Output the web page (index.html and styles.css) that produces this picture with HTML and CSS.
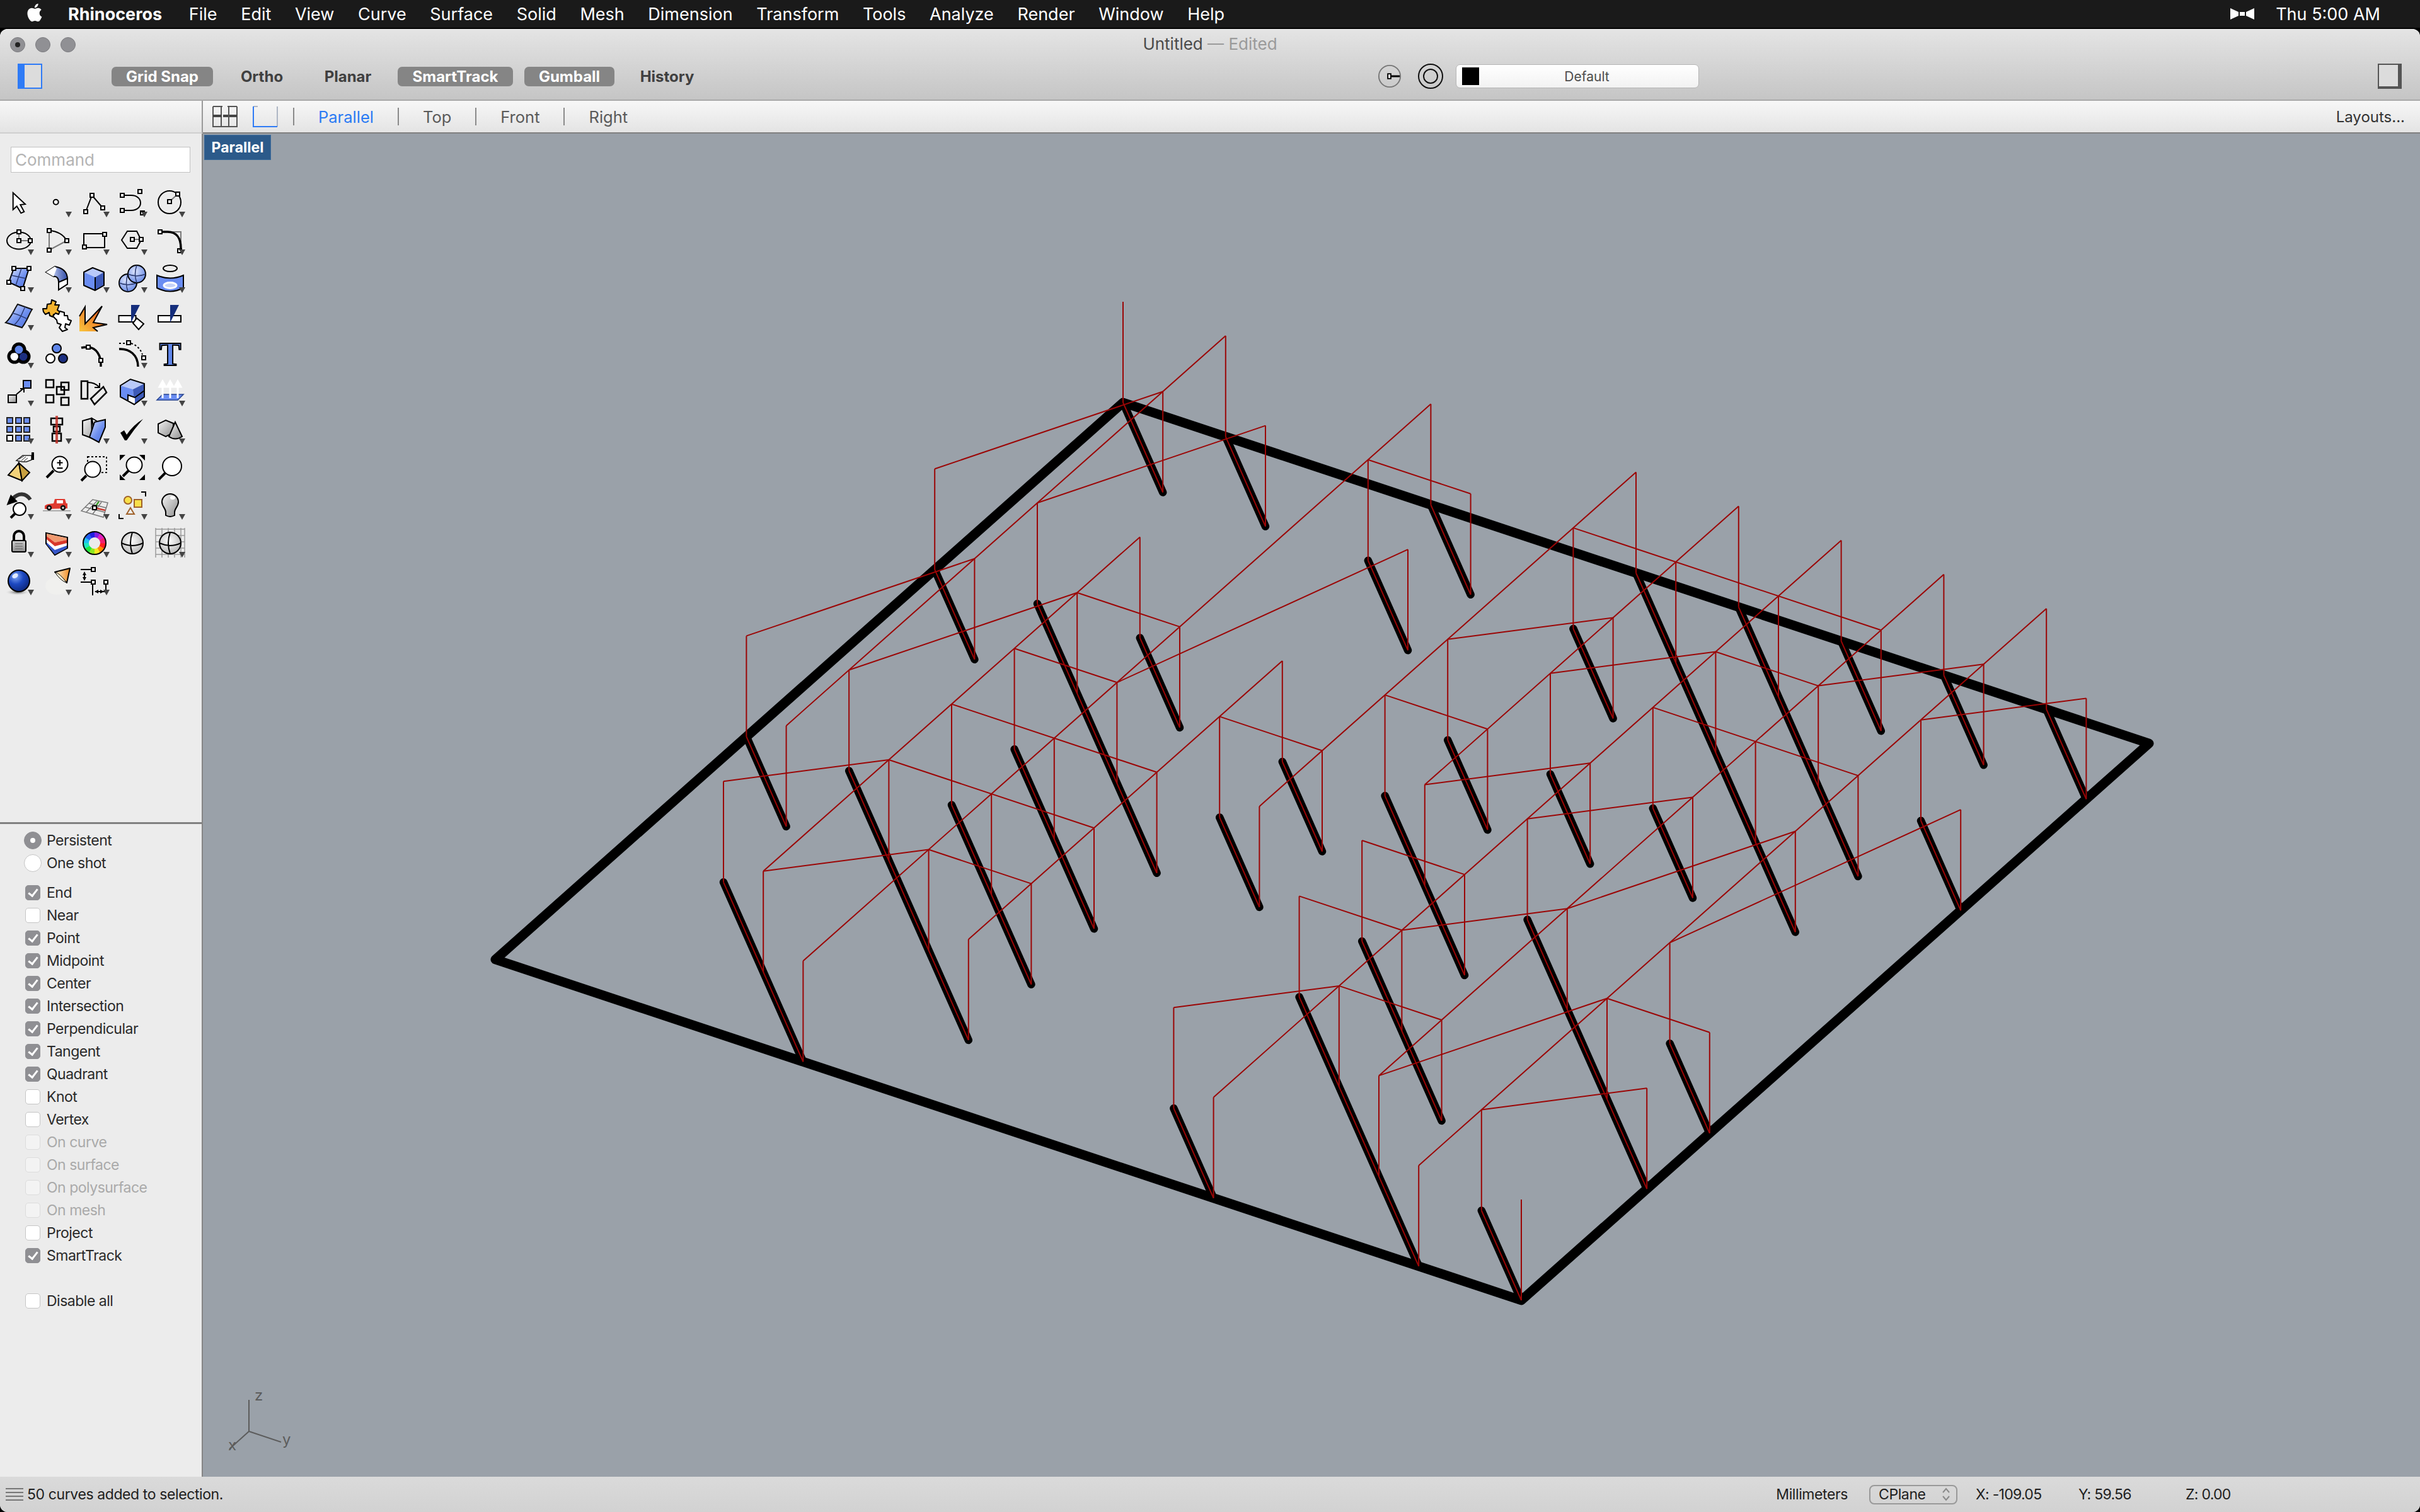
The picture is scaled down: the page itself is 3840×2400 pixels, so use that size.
FILE: index.html
```html
<!DOCTYPE html>
<html lang="en">
<head>
<meta charset="utf-8">
<title>Rhinoceros</title>
<link rel="stylesheet" href="styles.css">
</head>
<body>
<svg class="defs" width="0" height="0">
<defs>
<linearGradient id="b" x1="0" y1="0" x2="1" y2="1"><stop offset="0" stop-color="#dbe3fd"/><stop offset=".55" stop-color="#6f90ef"/><stop offset="1" stop-color="#4a6cd8"/></linearGradient>
<linearGradient id="sw" x1="0" y1="0" x2="1" y2="0"><stop offset="0" stop-color="#fff"/><stop offset=".2" stop-color="#cdd8f8"/><stop offset="1" stop-color="#2f4aa5"/></linearGradient>
<linearGradient id="o" x1="0" y1="1" x2="1" y2="0"><stop offset="0" stop-color="#f9c63e"/><stop offset=".6" stop-color="#ee7a28"/><stop offset="1" stop-color="#dd3a18"/></linearGradient>
<linearGradient id="g" x1="0" y1="0" x2="1" y2="1"><stop offset="0" stop-color="#f4f4f4"/><stop offset="1" stop-color="#8e8e8e"/></linearGradient>
<linearGradient id="lk" x1="0" y1="0" x2="0" y2="1"><stop offset="0" stop-color="#cfcfcf"/><stop offset="1" stop-color="#8b8b8b"/></linearGradient>
<linearGradient id="cone" x1="0" y1="0" x2="1" y2="0"><stop offset="0" stop-color="#fff3d6"/><stop offset="1" stop-color="#f08a20"/></linearGradient>
<radialGradient id="ball" cx=".35" cy=".3" r=".8"><stop offset="0" stop-color="#7fa6f5"/><stop offset=".45" stop-color="#1c48c0"/><stop offset="1" stop-color="#0a2270"/></radialGradient>
<radialGradient id="sph" cx=".4" cy=".35" r=".75"><stop offset="0" stop-color="#dfe6fd"/><stop offset="1" stop-color="#5a7fe2"/></radialGradient>
<radialGradient id="gs" cx=".45" cy=".4" r=".75"><stop offset="0" stop-color="#ffffff"/><stop offset="1" stop-color="#a9a9a9"/></radialGradient>
<radialGradient id="sh" cx=".5" cy=".5" r=".5"><stop offset="0" stop-color="#555"/><stop offset="1" stop-color="#ececec" stop-opacity="0"/></radialGradient>
<rect id="q" class="sq" x="-3" y="-3" width="6" height="6"/>
<polygon id="t" class="tri" points="44,46 54,46 49,55"/>
</defs>
</svg>

<header class="menubar">
  <svg class="apple" viewBox="0 0 24 24"><path d="M18.71 19.5c-.83 1.24-1.71 2.45-3.05 2.47-1.34.03-1.77-.79-3.29-.79-1.53 0-2 .77-3.27.82-1.31.05-2.3-1.32-3.14-2.53C4.25 17 2.94 12.45 4.7 9.39c.87-1.52 2.43-2.48 4.12-2.51 1.28-.02 2.5.87 3.29.87.78 0 2.26-1.07 3.81-.91.65.03 2.47.26 3.64 1.98-.09.06-2.17 1.28-2.15 3.81.03 3.02 2.65 4.03 2.68 4.04-.03.07-.42 1.44-1.38 2.83M13 3.5c.73-.83 1.94-1.46 2.94-1.5.13 1.17-.34 2.35-1.04 3.19-.69.85-1.83 1.51-2.95 1.42-.15-1.15.41-2.35 1.05-3.11z"/></svg>
  <nav class="menus">
    <span class="app">Rhinoceros</span><span>File</span><span>Edit</span><span>View</span><span>Curve</span><span>Surface</span><span>Solid</span><span>Mesh</span><span>Dimension</span><span>Transform</span><span>Tools</span><span>Analyze</span><span>Render</span><span>Window</span><span>Help</span>
  </nav>
  <div class="extras">
    <svg class="bowtie" viewBox="0 0 38 18"><path d="M0 0 13 6V12L0 18ZM38 0 25 6V12L38 18ZM15 6H23V12H15Z"/></svg>
    <span>Thu 5:00 AM</span>
  </div>
</header>

<div class="window">
  <div class="chrome">
    <div class="titlebar">
      <div class="lights"><i class="light active"></i><i class="light"></i><i class="light"></i></div>
      <div class="title">Untitled <span class="edited">— Edited</span></div>
      <div></div>
    </div>
    <div class="tools">
      <svg class="panel-l" viewBox="0 0 39 40"><rect x="1" y="1" width="37" height="38" fill="#dcdcdc" stroke="#2f7bf6" stroke-width="2"/><rect width="11" height="40" fill="#2f7bf6"/></svg>
      <div class="toggles">
        <span class="tg on t1">Grid Snap</span><span class="tg t2">Ortho</span><span class="tg t3">Planar</span><span class="tg on t4">SmartTrack</span><span class="tg on t5">Gumball</span><span class="tg t6">History</span>
      </div>
      <div class="center">
        <svg class="osnap" viewBox="0 0 40 40"><circle cx="20" cy="20" r="18" fill="none" stroke="#777" stroke-width="2"/><rect x="17" y="16" width="5" height="8" fill="#fff" stroke="#000" stroke-width="2"/><path d="M22 20H37" stroke="#000" stroke-width="3"/></svg>
        <svg class="osnap two" viewBox="0 0 42 42"><circle cx="21" cy="21" r="19" fill="none" stroke="#111" stroke-width="2"/><circle cx="21" cy="21" r="11" fill="none" stroke="#111" stroke-width="2"/></svg>
        <div class="layer"><i class="swatch"></i><span>Default</span></div>
      </div>
      <svg class="panel-r" viewBox="0 0 38 40"><rect x="1" y="1" width="34" height="36" fill="#dcdcdc" stroke="#555" stroke-width="2"/><rect x="32" y="0" width="6" height="40" fill="#555"/><rect y="36" width="38" height="4" fill="#555"/></svg>
    </div>
  </div>

  <div class="tabs">
    <div class="tabs-left"></div>
    <div class="tabs-right">
      <svg class="vp-ic" viewBox="0 0 40 34"><path d="M1 1V33H39V1M1 1H16M24 1H39M14 1V33M26 1V33" fill="none" stroke="#555" stroke-width="2"/><path d="M1 16H39" stroke="#444" stroke-width="4" stroke-dasharray="14 2 8 2 14"/></svg>
      <svg class="vp-ic" viewBox="0 0 40 34"><path d="M1 1H8M39 1V33M1 1V33" fill="none" stroke="#aeb6c4" stroke-width="2"/><path d="M1 1V33H39" fill="none" stroke="#2f7bf6" stroke-width="2"/></svg>
      <i class="sep"></i><span class="tab active">Parallel</span>
      <i class="sep"></i><span class="tab">Top</span>
      <i class="sep"></i><span class="tab">Front</span>
      <i class="sep"></i><span class="tab">Right</span>
      <span class="layouts">Layouts...</span>
    </div>
  </div>

  <div class="main">
    <aside class="side">
      <div class="command">Command</div>
      <div class="palette">
        <svg class="ic" viewBox="0 0 60 60"><polygon class="w" points="20.7,16 20.7,42.7 26.7,37.3 33.3,48.3 38.3,46 32.3,35 40,34"/></svg>
        <svg class="ic" viewBox="0 0 60 60"><circle class="w" cx="28.7" cy="30.7" r="4"/><use href="#t"/></svg>
        <svg class="ic" viewBox="0 0 60 60"><path class="k" d="M16 46 26 20 43 40"/><use href="#q" x="16" y="46"/><use href="#q" x="26" y="20"/><use href="#q" x="43" y="40"/><use href="#t"/></svg>
        <svg class="ic" viewBox="0 0 60 60"><path class="k" d="M14 20H28C48 20 48 44 28 44H14"/><use href="#q" x="14" y="20"/><use href="#q" x="42" y="14"/><use href="#q" x="14" y="44"/><use href="#q" x="46" y="48"/><use href="#t"/></svg>
        <svg class="ic" viewBox="0 0 60 60"><circle class="k" cx="29" cy="31" r="18"/><path class="gl" d="M29 30 42 18"/><use href="#q" x="29" y="30"/><use href="#q" x="42" y="18"/><use href="#t"/></svg>

        <svg class="ic" viewBox="0 0 60 60"><ellipse class="k" cx="30" cy="32" rx="19" ry="13.5"/><path class="gl" d="M30 18V32H48"/><use href="#q" x="30" y="18"/><use href="#q" x="30" y="32"/><use href="#q" x="48" y="32"/><use href="#t"/></svg>
        <svg class="ic" viewBox="0 0 60 60"><path class="gl" d="M18 16V47L46 32"/><path class="k" d="M18 16C31 17 41 23 46 32"/><use href="#q" x="18" y="16"/><use href="#q" x="46" y="32"/><use href="#q" x="18" y="47"/><use href="#t"/></svg>
        <svg class="ic" viewBox="0 0 60 60"><rect class="k" x="13" y="21" width="33" height="22"/><use href="#q" x="46" y="22"/><use href="#q" x="14" y="42"/><use href="#t"/></svg>
        <svg class="ic" viewBox="0 0 60 60"><polygon class="k" points="13,31 22,17 37,17 44,31 37,44 22,44"/><path class="gl" d="M30 30H44"/><use href="#q" x="30" y="30"/><use href="#q" x="44" y="30"/><use href="#t"/></svg>
        <svg class="ic" viewBox="0 0 60 60"><path class="gl" d="M23 18H47V40"/><path class="k th" d="M14 18H26C40 18 47 28 47 44"/><use href="#q" x="14" y="18"/><use href="#q" x="45" y="48"/><use href="#t"/></svg>

        <svg class="ic" viewBox="0 0 60 60"><path d="M22 16H46L36 48 14 38Z" fill="url(#b)" stroke="#000" stroke-width="2"/><path class="dk" d="M34 16 25 43M18 27 41 32"/><use href="#q" x="22" y="16"/><use href="#q" x="46" y="16"/><use href="#q" x="14" y="38"/><use href="#q" x="36" y="48"/><use href="#t"/></svg>
        <svg class="ic" viewBox="0 0 60 60"><path d="M13 22 27 13C38 15 47 21 47 33V41L33 50V37C33 30 28 28 25 29Z" fill="url(#sw)" stroke="#000" stroke-width="2"/><path d="M13 22 27 13 30 16 25 29Z" fill="#fff"/><path d="M33 50V38L47 32V41Z" fill="#fff" stroke="#000" stroke-width="2"/><use href="#t"/></svg>
        <svg class="ic" viewBox="0 0 60 60"><polygon points="13,22 27,15 45,22 31,30" fill="#b9c9f9"/><polygon points="13,22 31,30 31,51 13,43" fill="#6a8df2"/><polygon points="31,30 45,22 45,43 31,51" fill="#3d5ab8"/><path class="k" d="M13 22 27 15 45 22V43L31 51 13 43ZM31 30V51" stroke-linejoin="round"/><use href="#t"/></svg>
        <svg class="ic" viewBox="0 0 60 60"><circle cx="23" cy="39" r="14" fill="url(#sph)" stroke="#000" stroke-width="2"/><path class="dk" d="M9 39Q23 45 37 39M23 25Q18 39 23 53"/><circle cx="37" cy="25" r="14" fill="url(#sph)" stroke="#000" stroke-width="2"/><path class="dk" d="M23 25Q37 31 51 25M37 11Q32 25 37 39"/><use href="#t"/></svg>
        <svg class="ic" viewBox="0 0 60 60"><ellipse class="k" cx="30" cy="16" rx="11" ry="5"/><path d="M9 27Q30 36 51 27V47Q30 58 9 47Z" fill="#6a8df2" stroke="#000" stroke-width="2"/><ellipse cx="30" cy="43" rx="10" ry="4.5" fill="#c5d2f8" stroke="#fff" stroke-width="3"/><use href="#t"/></svg>

        <svg class="ic" viewBox="0 0 60 60"><path d="M28 13 51 21C46 28 44 38 35 50L9 42C17 36 22 22 28 13Z" fill="url(#b)" stroke="#111" stroke-width="2"/><path class="dk" d="M40 17C35 26 33 37 22 46M19 27C27 28 36 33 43 36" /><use href="#t"/></svg>
        <svg class="ic" viewBox="0 0 60 60"><path d="M8 20 14 20 15 13 21 12 22 6 29 9 27 14 34 14 31 22 36 26 29 31 25 29 24 33 19 31 18 26 12 29 9 25Z" fill="#f3b32f" stroke="#000" stroke-width="2" stroke-linejoin="round"/><path d="M24 32 28 27 33 29 35 24 42 26 42 31 47 31 48 37 53 39 50 46 44 44 43 50 47 53 39 56 34 50 37 45 31 43 30 38Z" fill="#fff" stroke="#000" stroke-width="2" stroke-linejoin="round"/></svg>
        <svg class="ic" viewBox="0 0 60 60"><polygon points="6,32 15,17 15,44 42,16 28,42 50,45 28,50 35,56 6,56" fill="url(#o)"/><path class="k" d="M6 32 15 17V44L42 16 28 42 50 45 28 50 35 56"/></svg>
        <svg class="ic" viewBox="0 0 60 60"><rect class="w" x="8.5" y="31" width="27" height="10"/><polygon points="28,14 42,14 28,42" fill="#152e7c"/><polygon class="w" points="37,35 48,44 40,53 31,43"/></svg>
        <svg class="ic" viewBox="0 0 60 60"><rect class="w" x="11" y="31" width="36" height="10"/><polygon points="30,14 44,14 30,42" fill="#152e7c"/></svg>

        <svg class="ic" viewBox="0 0 60 60"><circle cx="23" cy="36" r="9" fill="#fff" stroke="#000" stroke-width="5"/><circle cx="37" cy="36" r="9" fill="#1c2f80" stroke="#000" stroke-width="5"/><circle cx="30" cy="25" r="9" fill="#5f86ea" stroke="#000" stroke-width="5"/><circle cx="23" cy="36" r="6" fill="#fff"/><circle cx="37" cy="36" r="6" fill="#1c2f80"/><use href="#t"/></svg>
        <svg class="ic" viewBox="0 0 60 60"><circle cx="30" cy="23" r="7" fill="#5f86ea" stroke="#000" stroke-width="2"/><circle cx="20" cy="39" r="7" fill="#fff" stroke="#000" stroke-width="2"/><circle cx="40" cy="39" r="7" fill="#1c2f80" stroke="#000" stroke-width="2"/></svg>
        <svg class="ic" viewBox="0 0 60 60"><path class="k th" d="M9 22Q13 21 20 21C32 22 41 33 40 52"/><use href="#q" x="20" y="21"/><use href="#q" x="40" y="42"/></svg>
        <svg class="ic" viewBox="0 0 60 60"><path class="k dot" d="M9 15H21M28 15C38 18 44 26 46 33"/><path class="k th" d="M9 24C25 23 39 33 39 52"/><use href="#q" x="24" y="14"/><use href="#q" x="48" y="38"/><use href="#t"/></svg>
        <svg class="ic" viewBox="0 0 60 60"><text class="icon-t" x="30" y="50">T</text></svg>

        <svg class="ic" viewBox="0 0 60 60"><rect x="13" y="37" width="13" height="12" fill="url(#g)" stroke="#000" stroke-width="2"/><rect x="37" y="14" width="12" height="12" fill="#6a8df2" stroke="#000" stroke-width="2"/><path class="k" d="M26 36 38 26M32 27H38V33" /><use href="#t"/></svg>
        <svg class="ic" viewBox="0 0 60 60"><path class="bx" d="M13 13H25V25H13ZM13 37H25V49H13ZM30 24H42V36H30ZM37 17H49V29H37ZM37 41H49V53H37Z"/></svg>
        <svg class="ic" viewBox="0 0 60 60"><path class="bx" d="M9 15H19V43H9ZM24 43 44 24 49 33 30 52Z"/><path class="k" d="M20 17C28 17 33 20 37 24M30 25H38V18"/></svg>
        <svg class="ic" viewBox="0 0 60 60"><polygon points="11,22 27,12 49,19 31,28" fill="#b9c9f9"/><polygon points="11,22 31,28 33,52 11,40" fill="#6a8df2"/><polygon points="31,28 49,19 49,40 33,52" fill="#3d5ab8"/><polygon points="23,38 34,41 34,52 23,48" fill="#fff"/><path class="k" d="M11 22 27 12 49 19V40L33 52 11 40ZM23 46V37L34 41 49 30"/><use href="#t"/></svg>
        <svg class="ic" viewBox="0 0 60 60"><polygon points="18,36 51,36 42,45 9,45" fill="#6a8df2" stroke="#26438f" stroke-width="1.5"/><path class="arw" d="M18 42V21M13 24 18 15 23 24ZM30 42V21M25 24 30 15 35 24ZM42 42V21M37 24 42 15 47 24Z"/><use href="#t"/></svg>

        <svg class="ic" viewBox="0 0 60 60"><rect class="bl" x="11" y="13" width="9" height="9"/><rect class="bl" x="25" y="13" width="9" height="9"/><rect class="bl" x="38" y="13" width="9" height="9"/><rect class="bl" x="11" y="27" width="9" height="9"/><rect class="bl" x="25" y="27" width="9" height="9"/><rect class="bl" x="38" y="27" width="9" height="9"/><rect class="w" x="11" y="41" width="9" height="9"/><rect class="bl" x="25" y="41" width="9" height="9"/><rect class="bl" x="38" y="41" width="9" height="9"/><use href="#t"/></svg>
        <svg class="ic" viewBox="0 0 60 60"><path class="bx" d="M21 14H39V24H21ZM25 27H35V35H25ZM23 38H37V50H23Z"/><rect x="28" y="10" width="4" height="44" fill="#c02a20" opacity=".8"/><use href="#t"/></svg>
        <svg class="ic" viewBox="0 0 60 60"><path d="M11 18 25 14 26 40 38 50 11 40Z" fill="url(#g)" stroke="#000" stroke-width="2"/><path d="M26 14 38 21 28 28Z" fill="#fff" stroke="#000" stroke-width="2"/><path d="M30 20 47 16 47 28 37 52 22 44Z" fill="url(#b)" stroke="#000" stroke-width="2"/><use href="#t"/></svg>
        <svg class="ic" viewBox="0 0 60 60"><path d="M11 37 17 33 21 40Q31 25 47 15 33 31 21 49L18 49Z" fill="#000"/><use href="#t"/></svg>
        <svg class="ic" viewBox="0 0 60 60"><polygon points="11,23 23,17 35,22 35,37 23,43 11,37" fill="url(#g)" stroke="#000" stroke-width="2"/><path d="M38 20 49 43Q38 50 28 43Z" fill="url(#g)" stroke="#000" stroke-width="2"/><use href="#t"/></svg>

        <svg class="ic" viewBox="0 0 60 60"><polygon points="30,25 13,44 35,53" fill="#f2d27a" stroke="#000" stroke-width="2"/><polygon points="30,25 47,40 35,53" fill="#c8a040" stroke="#000" stroke-width="2"/><path d="M26 21 36 13H50V20L42 23 36 23Z" fill="#fff" stroke="#222" stroke-width="1.5"/><path d="M30 19 38 14M34 21 41 15M38 22 44 17" stroke="#222" stroke-width="1"/><rect x="50" y="8" width="4" height="12" fill="#000"/></svg>
        <svg class="ic" viewBox="0 0 60 60"><circle class="w" cx="35" cy="27" r="12.5"/><path class="hd" d="M25 37 14 48"/><path class="k" d="M35 20V29M30.500 24.500H39.500M30.500 33H39.500"/></svg>
        <svg class="ic" viewBox="0 0 60 60"><rect class="k dot" x="19" y="15" width="30" height="25"/><circle class="w" cx="27" cy="35" r="12.500"/><path class="hd" d="M17 45 9 53"/></svg>
        <svg class="ic" viewBox="0 0 60 60"><circle class="w" cx="33" cy="28" r="12.500"/><path class="hd" d="M24 37 15 46"/><path d="M10 12H19L10 21ZM50 12H41L50 21ZM10 52H19L10 43ZM50 52H41L50 43Z"/></svg>
        <svg class="ic" viewBox="0 0 60 60"><circle class="w" cx="33" cy="30" r="15"/><path class="hd" d="M22 41 12 51"/></svg>

        <svg class="ic" viewBox="0 0 60 60"><path d="M48 23C41 12 29 12 21 21" fill="none" stroke="#333" stroke-width="6"/><polygon points="10.500,32 17,15 28,26" fill="#000"/><circle class="w" cx="31" cy="38" r="10"/><path class="hd" d="M24 45 17 52"/><use href="#t"/></svg>
        <svg class="ic" viewBox="0 0 60 60"><rect x="8" y="40" width="44" height="1.500" fill="#999"/><path d="M11 38V33Q12 30 25 29L27 22H43L45 29H47V37Z" fill="#df3a30"/><rect x="30" y="24" width="10" height="5" fill="#fff"/><circle cx="18" cy="36" r="3" fill="#ddd" stroke="#111" stroke-width="2.500"/><circle cx="40" cy="36" r="3" fill="#ddd" stroke="#111" stroke-width="2.500"/><use href="#t"/></svg>
        <svg class="ic" viewBox="0 0 60 60"><path class="grd" d="M9 41 27 23 51 28 44 51ZM15 35 46 43M21 29 48 36M17 43 34 25M27 46 41 27"/><path d="M30 36 37 26" stroke="#3a9a2a" stroke-width="2.500"/><path d="M30 36 47 40" stroke="#c83a30" stroke-width="2.500"/><use href="#q" x="30" y="36"/><use href="#t"/></svg>
        <svg class="ic" viewBox="0 0 60 60"><circle cx="23" cy="24" r="6" fill="#f8e04a" stroke="#a0622a" stroke-width="2"/><rect x="33" y="23" width="12" height="12" fill="#f8e04a" stroke="#a0622a" stroke-width="2"/><polygon points="27,36 21,46 33,46" fill="none" stroke="#a0622a" stroke-width="2"/><path class="k" d="M44 11H51V18M9 46V53H16"/><use href="#t"/></svg>
        <svg class="ic" viewBox="0 0 60 60"><path d="M17 27A13 13 0 1 1 43 27C43 34 37 37 37 43V48Q30 52 23 48V43C23 37 17 34 17 27Z" fill="url(#g)" stroke="#000" stroke-width="2"/><ellipse cx="34" cy="20" rx="4" ry="3" fill="#fff"/><use href="#t"/></svg>

        <svg class="ic" viewBox="0 0 60 60"><path d="M22 28V21A8 8 0 0 1 38 21V28" fill="none" stroke="#000" stroke-width="4"/><rect x="19" y="28" width="22" height="18" rx="2" fill="url(#lk)" stroke="#000" stroke-width="2"/><path d="M24 33H36M24 37H36M24 41H36" stroke="#777" stroke-width="1.500"/><use href="#t"/></svg>
        <svg class="ic" viewBox="0 0 60 60"><path d="M13 16 47 23V40L27 51 13 33Z" fill="#fff" stroke="#000" stroke-width="2"/><path d="M14 17 46 24V27L27 31 14 21Z" fill="#f09a70"/><path d="M14 21 27 31 46 27V32L27 37 14 26Z" fill="#d8382a"/><path d="M14 31 27 43 46 36V40L27 50 14 34Z" fill="#3556c8"/><use href="#t"/></svg>
        <svg class="ic" viewBox="0 0 60 60"><g class="wh"><circle pathLength="12" cx="30" cy="32" r="13.500" stroke="#ff2020"/><circle pathLength="12" cx="30" cy="32" r="13.500" stroke="#ff8a00" stroke-dashoffset="-1"/><circle pathLength="12" cx="30" cy="32" r="13.500" stroke="#f8e820" stroke-dashoffset="-2"/><circle pathLength="12" cx="30" cy="32" r="13.500" stroke="#90e820" stroke-dashoffset="-3"/><circle pathLength="12" cx="30" cy="32" r="13.500" stroke="#20e840" stroke-dashoffset="-4"/><circle pathLength="12" cx="30" cy="32" r="13.500" stroke="#20e8c0" stroke-dashoffset="-5"/><circle pathLength="12" cx="30" cy="32" r="13.500" stroke="#20c0f0" stroke-dashoffset="-6"/><circle pathLength="12" cx="30" cy="32" r="13.500" stroke="#2060f0" stroke-dashoffset="-7"/><circle pathLength="12" cx="30" cy="32" r="13.500" stroke="#2020e0" stroke-dashoffset="-8"/><circle pathLength="12" cx="30" cy="32" r="13.500" stroke="#8020e0" stroke-dashoffset="-9"/><circle pathLength="12" cx="30" cy="32" r="13.500" stroke="#e020c0" stroke-dashoffset="-10"/><circle pathLength="12" cx="30" cy="32" r="13.500" stroke="#f02070" stroke-dashoffset="-11"/></g><circle class="k" cx="30" cy="32" r="18"/><use href="#t"/></svg>
        <svg class="ic" viewBox="0 0 60 60"><circle cx="30" cy="32" r="17" fill="url(#gs)" stroke="#000" stroke-width="2"/><path class="k" d="M30 15Q24 32 30 49M13 32Q30 40 47 32"/></svg>
        <svg class="ic" viewBox="0 0 60 60"><path class="grd2" d="M7 8V55M17 8V55M27 8V55M37 8V55M47 8V55M53 8V55M7 10H53M7 20H53M7 30H53M7 40H53M7 50H53"/><circle cx="30" cy="32" r="17" fill="url(#gs)" stroke="#000" stroke-width="2"/><path class="k" d="M30 15Q24 32 30 49M13 32Q30 40 47 32"/><use href="#t"/></svg>

        <svg class="ic" viewBox="0 0 60 60"><ellipse cx="28" cy="50" rx="20" ry="5" fill="url(#sh)"/><circle cx="30" cy="32" r="17" fill="url(#ball)" stroke="#000" stroke-width="2"/><ellipse cx="24" cy="24" rx="5" ry="3.500" fill="#dfe9ff" transform="rotate(-30 24 24)"/><use href="#t"/></svg>
        <svg class="ic" viewBox="0 0 60 60"><ellipse cx="30" cy="40" rx="18" ry="14" fill="#f0f0ee"/><path d="M51 12 27 18 46 35Z" fill="url(#cone)" stroke="#000" stroke-width="2" stroke-linejoin="round"/><path d="M27 18Q34 19 46 35Q36 32 27 18Z" fill="#fff6d8" stroke="#000" stroke-width="1"/><use href="#t"/></svg>
        <svg class="ic" viewBox="0 0 60 60"><path class="k" d="M8 14H28M8 34H28M27 34V55M48 34V50M14 22V30M31 49H47"/><path d="M14 17 11 23H17ZM14 32 11 26H17ZM30 49 36 46V52ZM45 49 39 46V52Z" fill="#000"/><use href="#q" x="28" y="14"/><use href="#q" x="28" y="34"/><use href="#q" x="48" y="34"/><use href="#t"/></svg>
      </div>

      <div class="snaps">
        <div class="row"><i class="rb on"></i>Persistent</div>
        <div class="row"><i class="rb"></i>One shot</div>
        <div class="gap"></div>
        <div class="row"><i class="cb on"></i>End</div>
        <div class="row"><i class="cb"></i>Near</div>
        <div class="row"><i class="cb on"></i>Point</div>
        <div class="row"><i class="cb on"></i>Midpoint</div>
        <div class="row"><i class="cb on"></i>Center</div>
        <div class="row"><i class="cb on"></i>Intersection</div>
        <div class="row"><i class="cb on"></i>Perpendicular</div>
        <div class="row"><i class="cb on"></i>Tangent</div>
        <div class="row"><i class="cb on"></i>Quadrant</div>
        <div class="row"><i class="cb"></i>Knot</div>
        <div class="row"><i class="cb"></i>Vertex</div>
        <div class="row off"><i class="cb"></i>On curve</div>
        <div class="row off"><i class="cb"></i>On surface</div>
        <div class="row off"><i class="cb"></i>On polysurface</div>
        <div class="row off"><i class="cb"></i>On mesh</div>
        <div class="row"><i class="cb"></i>Project</div>
        <div class="row"><i class="cb on"></i>SmartTrack</div>
        <div class="row"></div>
        <div class="row"><i class="cb"></i>Disable all</div>
      </div>
    </aside>

    <section class="viewport">
      <div class="vp-label">Parallel</div>
      <svg class="scene" viewBox="322 212 3518 2132">
        <g transform="matrix(162.8 54.1 -99.6 88.4 1782 639)">
          <path class="edge" d="M0 0H10V10H0Z"/>
          <path class="thick" d="M0 0l1 1M1 0l1 1M3 0l1 1M3 1l1 1M5 0l4 4M6 0l3 3M7 0l1 1M8 0l1 1M9 0l1 1M0 3l1 1M1 3l3 3M2 3l1 1M0 6l1 1M1 6l3 3M2 6l2 2M2 5l2 2M5 1l1 1M5 3l1 1M4 4l1 1M4 5l1 1M5 4l2 2M6 3l1 1M7 3l1 1M9 2l1 1M7 5l3 3M6 6l2 2M6 7l3 3M9 6l1 1M6 9l1 1M1 8l2 2M9 9l1 1"/>
          <path class="red" d="M0 0l1 1M1 0l1 1M3 0l1 1M3 1l1 1M5 0l4 4M6 0l3 3M7 0l1 1M8 0l1 1M9 0l1 1M0 3l1 1M1 3l3 3M2 3l1 1M0 6l1 1M1 6l3 3M2 6l2 2M2 5l2 2M5 1l1 1M5 3l1 1M4 4l1 1M4 5l1 1M5 4l2 2M6 3l1 1M7 3l1 1M9 2l1 1M7 5l3 3M6 6l2 2M6 7l3 3M9 6l1 1M6 9l1 1M1 8l2 2M9 9l1 1"/>
          <path class="red" d="M0 0l-.8057-1.3169M0 3l-.8057-1.3169M0 6l-.8057-1.3169M1 0l-.8057-1.3169M1 1l-.8057-1.3169M1 3l-.8057-1.3169M1 4l-.8057-1.3169M1 6l-.8057-1.3169M1 7l-.8057-1.3169M1 8l-.8057-1.3169M2 1l-.8057-1.3169M2 3l-.8057-1.3169M2 4l-.8057-1.3169M2 5l-.8057-1.3169M2 6l-.8057-1.3169M2 7l-.8057-1.3169M2 9l-.8057-1.3169M3 0l-.8057-1.3169M3 1l-.8057-1.3169M3 4l-.8057-1.3169M3 5l-.8057-1.3169M3 6l-.8057-1.3169M3 7l-.8057-1.3169M3 8l-.8057-1.3169M3 10l-.8057-1.3169M4 1l-.8057-1.3169M4 2l-.8057-1.3169M4 4l-.8057-1.3169M4 5l-.8057-1.3169M4 6l-.8057-1.3169M4 7l-.8057-1.3169M4 8l-.8057-1.3169M4 9l-.8057-1.3169M5 0l-.8057-1.3169M5 1l-.8057-1.3169M5 3l-.8057-1.3169M5 4l-.8057-1.3169M5 5l-.8057-1.3169M5 6l-.8057-1.3169M6 0l-.8057-1.3169M6 1l-.8057-1.3169M6 2l-.8057-1.3169M6 3l-.8057-1.3169M6 4l-.8057-1.3169M6 5l-.8057-1.3169M6 6l-.8057-1.3169M6 7l-.8057-1.3169M6 9l-.8057-1.3169M7 0l-.8057-1.3169M7 1l-.8057-1.3169M7 2l-.8057-1.3169M7 3l-.8057-1.3169M7 4l-.8057-1.3169M7 5l-.8057-1.3169M7 6l-.8057-1.3169M7 7l-.8057-1.3169M7 8l-.8057-1.3169M7 10l-.8057-1.3169M8 0l-.8057-1.3169M8 1l-.8057-1.3169M8 2l-.8057-1.3169M8 3l-.8057-1.3169M8 4l-.8057-1.3169M8 6l-.8057-1.3169M8 8l-.8057-1.3169M8 9l-.8057-1.3169M9 0l-.8057-1.3169M9 1l-.8057-1.3169M9 2l-.8057-1.3169M9 3l-.8057-1.3169M9 4l-.8057-1.3169M9 6l-.8057-1.3169M9 7l-.8057-1.3169M9 9l-.8057-1.3169M9 10l-.8057-1.3169M10 1l-.8057-1.3169M10 3l-.8057-1.3169M10 7l-.8057-1.3169M10 8l-.8057-1.3169M10 10l-.8057-1.3169"/>
        </g>
        <g transform="translate(0 -160)">
          <g transform="matrix(162.8 54.1 -99.6 88.4 1782 639)">
            <path class="red" d="M1 0V7M2 3V9M3 0V10M4 4V9M5 0V6M6 0V5M7 0V10M8 0V9M9 0V10"/>
            <path class="red" d="M5 1H8M7 3H9M7 2H8M5 4H6M6 6H7M6 7H7M7 8H8M9 7H10M2 4H3M2 5H3M2 6H4M2 7H4M3 8H4M4 5H5M3 1H4"/>
            <path class="red" d="M1 1 0 3M1 4 0 6M2 1 1 3M2 4 1 6M2 7 1 8M3 8 2 9M4 2 3 5M6 2 5 3M7 2 6 3M7 4 6 5M8 4 7 5M8 6 7 7M7 8 6 9M9 4 8 6M9 7 8 9M9 9 10 8M9 2 10 1M8 2 9 1M10 3 9 6"/>
          </g>
        </g>
      </svg>
      <svg class="axes" viewBox="0 -20 120 130"><path d="M44 62V12M44 62 13 90M44 62 95 79" fill="none" stroke="#5c5c5c" stroke-width="2"/><text x="53" y="13">z</text><text x="11" y="92">x</text><text x="97" y="83">y</text></svg>
    </section>
  </div>

  <footer class="status">
    <svg class="list" viewBox="0 0 28 20"><path d="M0 1H28M0 7H28M0 13H28M0 19H28" stroke="#777" stroke-width="2"/></svg>
    <span class="msg">50 curves added to selection.</span>
    <span class="units">Millimeters</span>
    <div class="cplane"><span>CPlane</span><svg class="updown" viewBox="0 0 14 22"><path d="M2 8 7 2 12 8M2 14 7 20 12 14" fill="none" stroke="#8a8a8a" stroke-width="2"/></svg></div>
    <span class="coord cx">X: -109.05</span><span class="coord cy">Y: 59.56</span><span class="coord cz">Z: 0.00</span>
  </footer>
</div>
</body>
</html>
```

FILE: styles.css
```css
html, body { margin: 0; padding: 0; }
body {
  width: 3840px; height: 2400px; background: #000; overflow: hidden;
  display: flex; flex-direction: column;
  font-family: Inter, "Liberation Sans", sans-serif;
}
i { font-style: normal; display: block; }
.defs { position: absolute; }
.sq { fill: #fff; stroke: #000; stroke-width: 2; }
.tri { fill: #444; }

.menubar {
  height: 44px; background: #1a1a1a; color: #fff; flex: none;
  display: flex; align-items: center; font-size: 27px; margin-bottom: 2px;
}
.apple { width: 34px; height: 34px; fill: #fff; margin-left: 38px; margin-top: -4px; }
.menus { display: flex; gap: 37.6px; margin-left: 36px; }
.app { font-weight: 700; margin-right: 5px; }
.extras { margin-left: auto; margin-right: 63px; display: flex; align-items: center; gap: 34px; }
.bowtie { width: 38px; height: 18px; fill: #fff; }

.window {
  flex: 1; min-height: 0; display: flex; flex-direction: column;
  border-radius: 12px; overflow: hidden; background: #ececec;
}
.chrome {
  height: 114px; flex: none; box-sizing: border-box;
  background: linear-gradient(#e4e4e4, #c5c5c5);
  border-top: 1px solid #efefef; border-bottom: 2px solid #a9a9a9;
}
.titlebar { height: 43px; display: grid; grid-template-columns: 1fr auto 1fr; align-items: center; }
.lights { display: flex; gap: 16px; padding-left: 16px; padding-top: 4px; }
.light { width: 24px; height: 24px; border-radius: 50%; background: #909094; border: 1px solid #7c7c80; box-sizing: border-box; position: relative; }
.light.active::after { content: ""; position: absolute; left: 7px; top: 7px; width: 8px; height: 8px; border-radius: 50%; background: #222; }
.title { font-size: 26px; color: #4a4a4a; padding-top: 1px; }
.edited { color: #9a9a9a; }
.tools { height: 62px; display: flex; align-items: center; padding-left: 28px; padding-right: 29px; }
.panel-l { width: 39px; height: 40px; flex: none; }
.toggles { display: flex; align-items: center; margin-left: 110px; font-size: 24px; font-weight: 700; color: #404040; }
.tg { height: 31px; line-height: 31px; border-radius: 7px; text-align: center; white-space: nowrap; flex: none; }
.tg.on { background: #858585; color: #fff; }
.t1 { width: 161px; }
.t2 { width: 69px; margin-left: 43px; }
.t3 { width: 76px; margin-left: 64px; }
.t4 { width: 183px; margin-left: 41px; }
.t5 { width: 143px; margin-left: 18px; }
.t6 { width: 87px; margin-left: 40px; }
.center { display: flex; align-items: center; margin-left: 1084px; }
.osnap { width: 38px; height: 38px; }
.osnap.two { width: 42px; height: 42px; margin-left: 25px; margin-right: 19px; }
.layer {
  width: 386px; height: 38px; box-sizing: border-box; background: linear-gradient(#fff, #f2f2f2);
  border: 1px solid #b5b5b5; border-radius: 7px; display: flex; align-items: center;
  font-size: 21px; color: #4d4d4d; padding-left: 9px;
}
.swatch { width: 27px; height: 28px; background: #000; flex: none; }
.layer span { flex: 1; text-align: center; padding-right: 6px; }
.panel-r { width: 38px; height: 40px; margin-left: auto; flex: none; }

.tabs { height: 52px; flex: none; display: flex; background: linear-gradient(#f7f7f7, #e3e3e3); }
.tabs-left { width: 320px; flex: none; border-right: 2px solid #9a9a9a; border-bottom: 2px solid #cfcfcf; height: 50px; }
.tabs-right {
  flex: 1; display: flex; align-items: center; font-size: 25.5px; color: #5a5a5a;
  border-bottom: 2px solid #808080; padding-left: 15px; height: 50px;
}
.vp-ic { width: 40px; height: 34px; margin-right: 24px; flex: none; }
.sep { width: 2px; height: 28px; background: #8a8a8a; flex: none; }
.tab { margin: 0 38px; }
.tab.active { color: #2b7bf4; }
.layouts { margin-left: auto; margin-right: 24px; font-size: 24px; color: #333; }

.main { flex: 1; min-height: 0; display: flex; }
.side { width: 320px; flex: none; background: #ececec; display: flex; flex-direction: column; border-right: 2px solid #868686; }
.command {
  margin: 21px 0 0 17px; width: 285px; height: 41px; box-sizing: border-box; flex: none;
  background: #fff; border: 1px solid #c2c2c2; color: #b4b4b4; font-size: 26px; line-height: 39px; padding-left: 6px;
}
.palette { display: grid; grid-template-columns: repeat(5, 60px); grid-auto-rows: 60px; margin-top: 16px; flex: 1; min-height: 0; }
.ic { width: 60px; height: 60px; display: block; }
.w { fill: #fff; stroke: #000; stroke-width: 2; }
.k { fill: none; stroke: #000; stroke-width: 2; }
.k.th { stroke-width: 3.5; }
.k.dot { stroke-dasharray: 3 3; }
.gl { fill: none; stroke: #7a7a7a; stroke-width: 2; }
.dk { fill: none; stroke: #2b3a70; stroke-width: 1.5; }
.bx { fill: none; stroke: #000; stroke-width: 2.5; }
.bl { fill: #6a8df2; stroke: #222; stroke-width: 2; }
.hd { fill: none; stroke: #000; stroke-width: 4; }
.arw { fill: #fff; stroke: #fff; stroke-width: 3; }
.grd { fill: none; stroke: #777; stroke-width: 1.5; }
.grd2 { fill: none; stroke: #9a9a9a; stroke-width: 1.5; }
.wh circle { fill: none; stroke-width: 9; stroke-dasharray: 1.05 10.95; }
.icon-t { font-family: "Liberation Serif", serif; font-weight: 700; font-size: 52px; text-anchor: middle; fill: #5f86ea; stroke: #000; stroke-width: 2; }

.snaps { height: 1039px; flex: none; box-sizing: border-box; border-top: 3px solid #808080; padding-top: 8px; font-size: 23px; letter-spacing: -.5px; color: #2a2a2a; }
.row { height: 36px; display: flex; align-items: center; padding-left: 74px; position: relative; }
.gap { height: 11px; }
.row.off { color: #aaa; }
.cb, .rb { position: absolute; box-sizing: border-box; background: #fff; border: 1px solid #c5c5c5; }
.cb { left: 40px; top: 6px; width: 24px; height: 24px; border-radius: 5px; }
.rb { left: 38px; top: 4px; width: 28px; height: 28px; border-radius: 50%; }
.off .cb { background: #f3f3f3; border-color: #dcdcdc; }
.cb.on, .rb.on { background: #8f8f93; border-color: #8f8f93; }
.cb.on::after { content: ""; position: absolute; left: 7px; top: 2px; width: 6px; height: 12px; border: solid #fff; border-width: 0 3px 3px 0; transform: rotate(38deg); }
.rb.on::after { content: ""; position: absolute; left: 9px; top: 9px; width: 8px; height: 8px; border-radius: 50%; background: #fff; }

.viewport { flex: 1; position: relative; background: #9aa1a9; overflow: hidden; min-width: 0; }
.scene { position: absolute; left: 0; top: 0; width: 3518px; height: 2132px; }
.edge, .thick, .red { fill: none; vector-effect: non-scaling-stroke; }
.edge { stroke: #000; stroke-width: 15; stroke-linejoin: round; }
.thick { stroke: #000; stroke-width: 12.5; stroke-linecap: round; }
.red { stroke: #9b0606; stroke-width: 2; }
.vp-label { position: absolute; left: 2px; top: 2px; width: 106px; height: 40px; background: #2c5a8a; border: 1px solid #3b6a9a; box-sizing: border-box; color: #fff; font-size: 23px; font-weight: 700; line-height: 38px; text-align: center; z-index: 1; }
.axes { position: absolute; left: 29px; top: 1978px; width: 120px; height: 130px; }
.axes text { font-size: 24px; fill: #5c5c5c; }

.status { height: 56px; flex: none; display: flex; align-items: center; background: linear-gradient(#dadada, #d2d2d2); font-size: 23px; letter-spacing: -.4px; color: #1e1e1e; }
.list { width: 28px; height: 20px; margin-left: 9px; flex: none; }
.msg { margin-left: 6px; }
.units { margin-left: auto; }
.cplane { margin-left: 34px; width: 140px; height: 31px; box-sizing: border-box; border: 2px solid #999; border-radius: 8px; display: flex; align-items: center; padding-left: 13px; position: relative; }
.updown { width: 14px; height: 22px; margin-left: auto; margin-right: 9px; }
.coord { letter-spacing: -.7px; }
.cx { margin-left: 29px; width: 163px; }
.cy { width: 170px; }
.cz { width: 372px; }
```
